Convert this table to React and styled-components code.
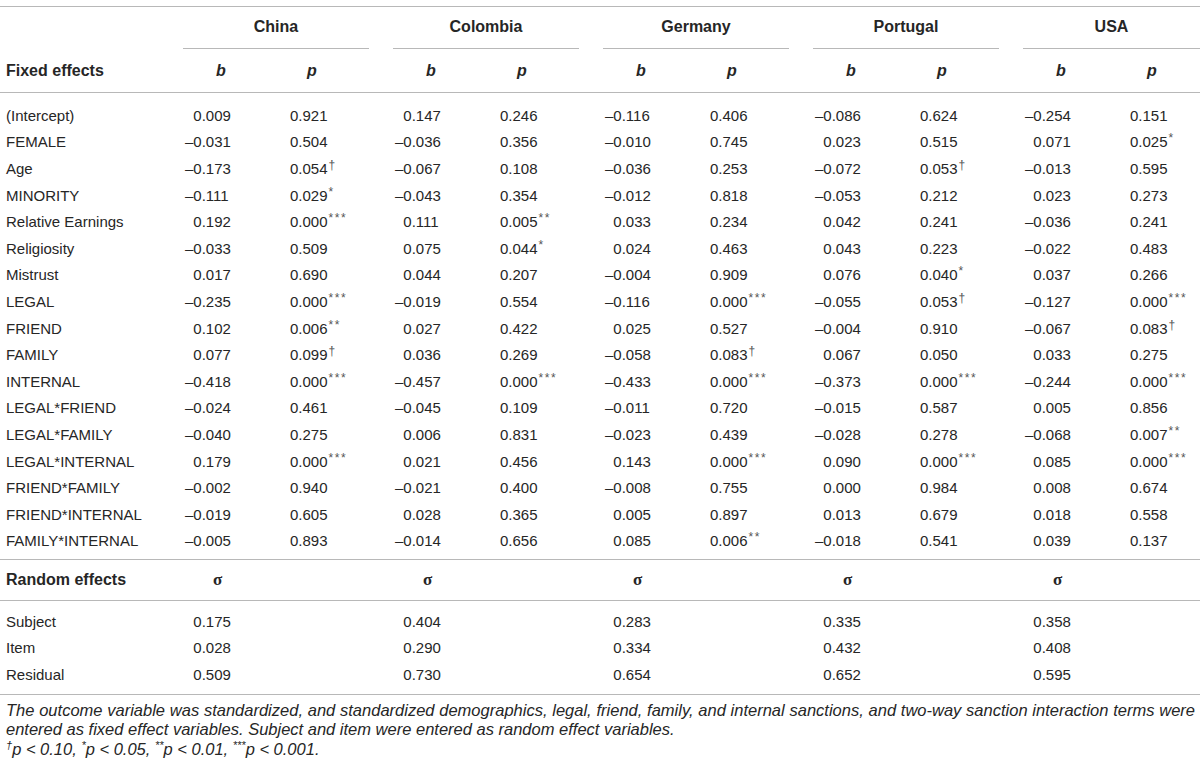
import React from "react";
import styled, { createGlobalStyle } from "styled-components";

const GlobalStyle = createGlobalStyle`
  html, body { margin: 0; padding: 0; background: #ffffff; }
  body {
    font-family: "Liberation Sans", Arial, Helvetica, sans-serif;
    color: #262626;
  }
`;

const COLS = "183px repeat(4, 107px 103px) 107px 1fr";
const RULE = "#b8b8b8";

const Page = styled.div`
  width: 1200px;
  padding-top: 6px;
`;

const Table = styled.div`
  border-top: 1px solid ${RULE};
`;

const Row = styled.div`
  display: grid;
  grid-template-columns: ${COLS};
  align-items: center;
  height: ${(p) => p.$h || 26.6}px;
`;

const Section = styled.div`
  padding-top: ${(p) => p.$pt}px;
  padding-bottom: ${(p) => p.$pb}px;
  border-bottom: 1px solid ${RULE};
`;

const HeadRow = styled(Row)`
  border-bottom: ${(p) => (p.$rule ? `1px solid ${RULE}` : "none")};
`;

const Country = styled.div`
  grid-column: span 2;
  align-self: stretch;
  display: flex;
  align-items: center;
  justify-content: center;
  margin-right: ${(p) => (p.$last ? 0 : 24)}px;
  border-bottom: 1px solid ${RULE};
  font-weight: bold;
  font-size: 16px;
  padding-bottom: 1px;
`;

const Empty = styled.div``;

const SectionTitle = styled.div`
  padding-left: 6px;
  font-weight: bold;
  font-size: 16px;
  white-space: nowrap;
`;

const StatHead = styled.div`
  padding-left: ${(p) => p.$pl}px;
  font-weight: bold;
  font-style: italic;
  font-size: 16px;
`;

const Sigma = styled.div`
  padding-left: 30px;
  font-family: "Liberation Serif", "Times New Roman", serif;
  font-weight: bold;
  font-size: 17px;
`;

const Label = styled.div`
  padding-left: 6px;
  font-size: 15px;
  white-space: nowrap;
`;

const Value = styled.div`
  padding-left: ${(p) => p.$pl ?? 2}px;
  font-size: 15px;
  white-space: nowrap;
`;

const Ghost = styled.span`
  visibility: hidden;
`;

const Sup = styled.sup`
  font-size: 12px;
  letter-spacing: ${(p) => (p.$stars ? "1.5px" : "0")};
  vertical-align: 5px;
  line-height: 0;
  margin-left: 1px;
  color: #555;
`;

const Notes = styled.div`
  padding: 6px 5px 0 6px;
  font-style: italic;
  font-size: 16.5px;
  line-height: 19.5px;
`;

const NoteLine = styled.p`
  margin: 0;
  text-align: justify;
`;

const NoteSup = styled.sup`
  font-size: 11px;
  vertical-align: 6px;
  line-height: 0;
`;

const countries = ["China", "Colombia", "Germany", "Portugal", "USA"];

const fixed = [
  ["(Intercept)", "0.009", "0.921", "0.147", "0.246", "–0.116", "0.406", "–0.086", "0.624", "–0.254", "0.151"],
  ["FEMALE", "–0.031", "0.504", "–0.036", "0.356", "–0.010", "0.745", "0.023", "0.515", "0.071", "0.025*"],
  ["Age", "–0.173", "0.054†", "–0.067", "0.108", "–0.036", "0.253", "–0.072", "0.053†", "–0.013", "0.595"],
  ["MINORITY", "–0.111", "0.029*", "–0.043", "0.354", "–0.012", "0.818", "–0.053", "0.212", "0.023", "0.273"],
  ["Relative Earnings", "0.192", "0.000***", "0.111", "0.005**", "0.033", "0.234", "0.042", "0.241", "–0.036", "0.241"],
  ["Religiosity", "–0.033", "0.509", "0.075", "0.044*", "0.024", "0.463", "0.043", "0.223", "–0.022", "0.483"],
  ["Mistrust", "0.017", "0.690", "0.044", "0.207", "–0.004", "0.909", "0.076", "0.040*", "0.037", "0.266"],
  ["LEGAL", "–0.235", "0.000***", "–0.019", "0.554", "–0.116", "0.000***", "–0.055", "0.053†", "–0.127", "0.000***"],
  ["FRIEND", "0.102", "0.006**", "0.027", "0.422", "0.025", "0.527", "–0.004", "0.910", "–0.067", "0.083†"],
  ["FAMILY", "0.077", "0.099†", "0.036", "0.269", "–0.058", "0.083†", "0.067", "0.050", "0.033", "0.275"],
  ["INTERNAL", "–0.418", "0.000***", "–0.457", "0.000***", "–0.433", "0.000***", "–0.373", "0.000***", "–0.244", "0.000***"],
  ["LEGAL*FRIEND", "–0.024", "0.461", "–0.045", "0.109", "–0.011", "0.720", "–0.015", "0.587", "0.005", "0.856"],
  ["LEGAL*FAMILY", "–0.040", "0.275", "0.006", "0.831", "–0.023", "0.439", "–0.028", "0.278", "–0.068", "0.007**"],
  ["LEGAL*INTERNAL", "0.179", "0.000***", "0.021", "0.456", "0.143", "0.000***", "0.090", "0.000***", "0.085", "0.000***"],
  ["FRIEND*FAMILY", "–0.002", "0.940", "–0.021", "0.400", "–0.008", "0.755", "0.000", "0.984", "0.008", "0.674"],
  ["FRIEND*INTERNAL", "–0.019", "0.605", "0.028", "0.365", "0.005", "0.897", "0.013", "0.679", "0.018", "0.558"],
  ["FAMILY*INTERNAL", "–0.005", "0.893", "–0.014", "0.656", "0.085", "0.006**", "–0.018", "0.541", "0.039", "0.137"],
];

const random = [
  ["Subject", "0.175", "0.404", "0.283", "0.335", "0.358"],
  ["Item", "0.028", "0.290", "0.334", "0.432", "0.408"],
  ["Residual", "0.509", "0.730", "0.654", "0.652", "0.595"],
];

function Coef({ v }) {
  if (v.startsWith("–")) return <Value>{v}</Value>;
  return (
    <Value>
      <Ghost>–</Ghost>
      {v}
    </Value>
  );
}

function PVal({ v }) {
  const m = v.match(/^([0-9.]+)(.*)$/);
  const num = m[1];
  const mark = m[2];
  return (
    <Value $pl={0}>
      {num}
      {mark && <Sup $stars={mark.includes("*")}>{mark}</Sup>}
    </Value>
  );
}

export default function App() {
  return (
    <>
      <GlobalStyle />
      <Page>
        <Table>
          <HeadRow $h={42}>
            <Empty />
            {countries.map((c, i) => (
              <Country key={c} $last={i === countries.length - 1}>
                {c}
              </Country>
            ))}
          </HeadRow>
          <HeadRow $h={43} $rule>
            <SectionTitle>Fixed effects</SectionTitle>
            {countries.map((c) => (
              <React.Fragment key={c}>
                <StatHead $pl={33}>b</StatHead>
                <StatHead $pl={17}>p</StatHead>
              </React.Fragment>
            ))}
          </HeadRow>
          <Section $pt={9} $pb={5}>
            {fixed.map((r) => (
              <Row key={r[0]}>
                <Label>{r[0]}</Label>
                {countries.map((c, i) => (
                  <React.Fragment key={c}>
                    <Coef v={r[1 + i * 2]} />
                    <PVal v={r[2 + i * 2]} />
                  </React.Fragment>
                ))}
              </Row>
            ))}
          </Section>
          <HeadRow $h={40} $rule>
            <SectionTitle>Random effects</SectionTitle>
            {countries.map((c) => (
              <React.Fragment key={c}>
                <Sigma>σ</Sigma>
                <Empty />
              </React.Fragment>
            ))}
          </HeadRow>
          <Section $pt={7} $pb={6}>
            {random.map((r) => (
              <Row key={r[0]}>
                <Label>{r[0]}</Label>
                {countries.map((c, i) => (
                  <React.Fragment key={c}>
                    <Coef v={r[1 + i]} />
                    <Empty />
                  </React.Fragment>
                ))}
              </Row>
            ))}
          </Section>
        </Table>
        <Notes>
          <NoteLine>
            The outcome variable was standardized, and standardized demographics, legal, friend, family, and
            internal sanctions, and two-way sanction interaction terms were entered as fixed effect variables.
            Subject and item were entered as random effect variables.
          </NoteLine>
          <NoteLine>
            <NoteSup>†</NoteSup>p &lt; 0.10, <NoteSup>*</NoteSup>p &lt; 0.05, <NoteSup>**</NoteSup>p &lt; 0.01,{" "}
            <NoteSup>***</NoteSup>p &lt; 0.001.
          </NoteLine>
        </Notes>
      </Page>
    </>
  );
}
